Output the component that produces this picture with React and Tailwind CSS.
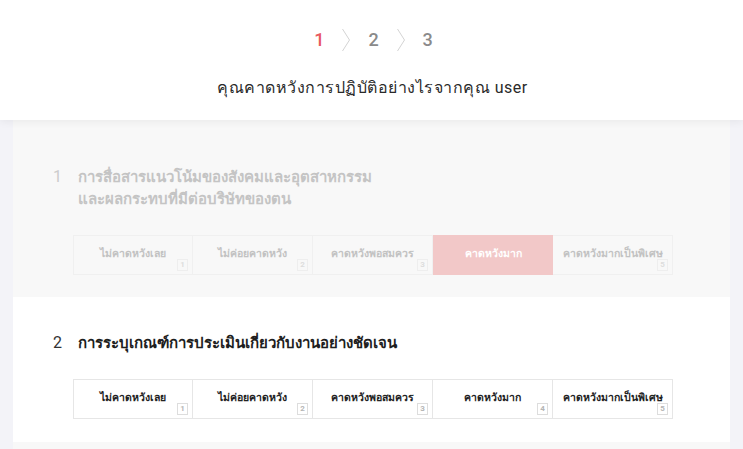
import React from "react";

const OPTIONS = ["ไม่คาดหวังเลย", "ไม่ค่อยคาดหวัง", "คาดหวังพอสมควร", "คาดหวังมาก", "คาดหวังมากเป็นพิเศษ"];

function Chevron() {
  return (
    <svg width="10" height="24" viewBox="0 0 10 24" className="mx-[17px]">
      <polyline points="1.5,1 8.5,12 1.5,23" fill="none" stroke="#d4d4d4" strokeWidth="1" />
    </svg>
  );
}

function Scale({ faded, selected }) {
  return (
    <div className="ml-[60px] mt-[25px] flex w-[600px]">
      {OPTIONS.map((label, i) => {
        const isSel = selected === i;
        return (
          <div
            key={label}
            className={
              "relative flex h-[40px] w-[120px] items-center justify-center text-[10.5px] font-bold " +
              (isSel
                ? "bg-[#f2c8c8] text-white"
                : faded
                ? "border border-[#f0f0f0] text-[#c2c2c2] " + (i > 0 ? "border-l-0" : "")
                : "border border-[#e6e6e6] text-[#222] " + (i > 0 ? "border-l-0" : ""))
            }
          >
            <span className="-mt-[2px]">{label}</span>
            {!isSel && (
              <span
                className={
                  "absolute bottom-[3px] right-[4px] flex h-[12px] w-[11px] items-center justify-center border text-[8px] leading-none " +
                  (faded ? "border-[#eeeeee] text-[#dddddd]" : "border-[#dddddd] text-[#b5b5b5]")
                }
              >
                {i + 1}
              </span>
            )}
          </div>
        );
      })}
    </div>
  );
}

export default function App() {
  return (
    <div className="min-h-screen bg-[#f3f3f8] font-['Roboto','Noto_Sans',sans-serif]">
      <header className="relative z-10 flex h-[120px] flex-col items-center bg-white shadow-[0_2px_8px_rgba(0,0,0,0.06)]">
        <div className="ml-[4px] mt-[28px] flex items-center text-[18px] font-medium leading-none">
          <span className="text-[#e85a62]">1</span>
          <Chevron />
          <span className="text-[#8a8a8a]">2</span>
          <Chevron />
          <span className="text-[#8a8a8a]">3</span>
        </div>
        <div className="ml-[2px] mt-[24px] text-[16px] tracking-[0.5px] text-[#2a2a2a]">
          คุณคาดหวังการปฏิบัติอย่างไรจากคุณ user
        </div>
      </header>

      <main className="mx-[13px]">
        <section className="bg-[#f8f8f8] pb-[22px] pt-[46px]">
          <div className="ml-[40px] flex text-[15px] leading-[22px]">
            <span className="w-[25px] text-[16px] text-[#cccccc]">1</span>
            <span className="font-bold text-[#c4c4c4]">
              การสื่อสารแนวโน้มของสังคมและอุตสาหกรรม
              <br />
              และผลกระทบที่มีต่อบริษัทของตน
            </span>
          </div>
          <Scale faded selected={3} />
        </section>

        <section className="bg-white pb-[23px] pt-[35px]">
          <div className="ml-[40px] flex text-[15px] leading-[22px]">
            <span className="w-[25px] text-[16px] text-[#333]">2</span>
            <span className="font-bold text-[#1e1e1e]">การระบุเกณฑ์การประเมินเกี่ยวกับงานอย่างชัดเจน</span>
          </div>
          <Scale />
        </section>

        <section className="h-[8px] bg-[#f8f8f8]" />
      </main>
    </div>
  );
}
